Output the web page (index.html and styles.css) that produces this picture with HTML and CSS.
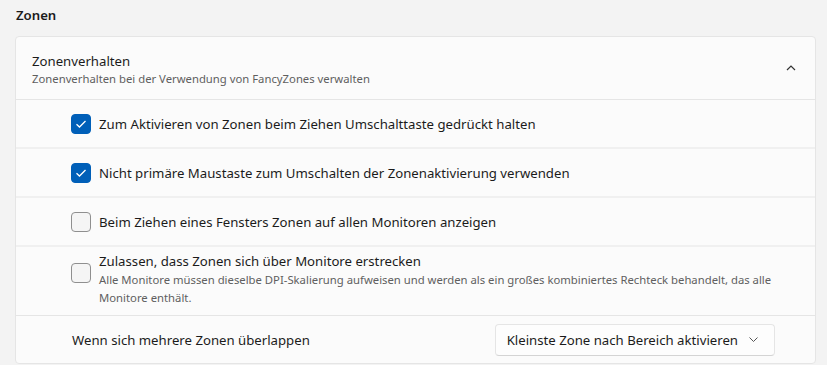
FILE: index.html
```html
<!DOCTYPE html>
<html lang="de">
<head>
  <meta charset="UTF-8">
  <title>Zonen</title>
  <link rel="stylesheet" href="styles.css">
</head>
<body>
  <h2 class="section-title">Zonen</h2>
  <div class="card">
    <div class="card-header">
      <div class="header-text">
        <div class="title">Zonenverhalten</div>
        <div class="subtitle">Zonenverhalten bei der Verwendung von FancyZones verwalten</div>
      </div>
      <svg class="chevron" width="10" height="6" viewBox="0 0 10 6"><path d="M1 5 L5 1 L9 5" fill="none" stroke="#333" stroke-width="1.2"/></svg>
    </div>

    <div class="row">
      <span class="check on"><svg width="12" height="10" viewBox="0 0 12 10"><path d="M1.5 5.2 L4.5 8 L10.5 2" fill="none" stroke="#fff" stroke-width="1.3"/></svg></span>
      <span class="label">Zum Aktivieren von Zonen beim Ziehen Umschalttaste gedrückt halten</span>
    </div>
    <div class="row">
      <span class="check on"><svg width="12" height="10" viewBox="0 0 12 10"><path d="M1.5 5.2 L4.5 8 L10.5 2" fill="none" stroke="#fff" stroke-width="1.3"/></svg></span>
      <span class="label">Nicht primäre Maustaste zum Umschalten der Zonenaktivierung verwenden</span>
    </div>
    <div class="row">
      <span class="check"></span>
      <span class="label">Beim Ziehen eines Fensters Zonen auf allen Monitoren anzeigen</span>
    </div>
    <div class="row row-tall">
      <span class="check"></span>
      <div class="label-block">
        <div class="label">Zulassen, dass Zonen sich über Monitore erstrecken</div>
        <div class="desc">Alle Monitore müssen dieselbe DPI-Skalierung aufweisen und werden als ein großes kombiniertes Rechteck behandelt, das alle Monitore enthält.</div>
      </div>
    </div>
    <div class="row row-last">
      <span class="label">Wenn sich mehrere Zonen überlappen</span>
      <div class="dropdown">
        <span>Kleinste Zone nach Bereich aktivieren</span>
        <svg width="9" height="5" viewBox="0 0 9 5"><path d="M0.5 0.5 L4.5 4.5 L8.5 0.5" fill="none" stroke="#555" stroke-width="1"/></svg>
      </div>
    </div>
  </div>
</body>
</html>
```

FILE: styles.css
```css
body {
  margin: 0;
  padding: 0 11px 0 15px;
  background: #f3f3f3;
  color: #1b1b1b;
  font-family: 'Noto Sans', 'Open Sans', sans-serif;
  font-size: 13.2px;
}
.section-title {
  margin: 0;
  padding: 5px 0 0 1px;
  height: 36px;
  box-sizing: border-box;
  font-size: 13.2px;
  font-weight: 600;
  line-height: 20px;
}
.card {
  background: #fbfbfb;
  border: 1px solid #e5e5e5;
  border-radius: 4px;
}
.card-header {
  display: flex;
  align-items: center;
  justify-content: space-between;
  height: 62px;
  padding: 0 19px 0 16px;
  border-bottom: 1px solid #e5e5e5;
}
.header-text {
  padding-top: 2px;
}
.header-text .title {
  line-height: 20px;
}
.header-text .subtitle {
  font-size: 11.3px;
  line-height: 16px;
  color: #5f5f5f;
}
.row {
  display: flex;
  align-items: center;
  gap: 8px;
  min-height: 47px;
  padding-left: 55px;
  border-bottom: 2px solid #f0f0f0;
}
.row-tall {
  align-items: flex-start;
  min-height: 68px;
  padding-top: 4px;
  box-sizing: border-box;
  border-bottom: none;
}
.row-tall .check {
  margin-top: 12px;
}
.row-tall .label {
  line-height: 20px;
}
.label-block {
  padding-right: 40px;
}
.desc {
  font-size: 11.3px;
  line-height: 18px;
  color: #5f5f5f;
}
.row-last {
  justify-content: space-between;
  padding-left: 56px;
  padding-right: 40px;
  border-top: 1px solid #e5e5e5;
  border-bottom: none;
}
.check {
  flex: none;
  width: 20px;
  height: 20px;
  box-sizing: border-box;
  border: 1px solid #8f8f8f;
  border-radius: 4px;
  background: #f5f5f5;
  display: flex;
  align-items: center;
  justify-content: center;
}
.check.on {
  background: #005fb8;
  border-color: #005fb8;
}
.dropdown {
  display: flex;
  align-items: center;
  gap: 11px;
  height: 32px;
  box-sizing: border-box;
  padding: 0 16px 0 11px;
  background: #fdfdfd;
  border: 1px solid #e5e5e5;
  border-bottom-color: #d4d4d4;
  border-radius: 4px;
}
```
